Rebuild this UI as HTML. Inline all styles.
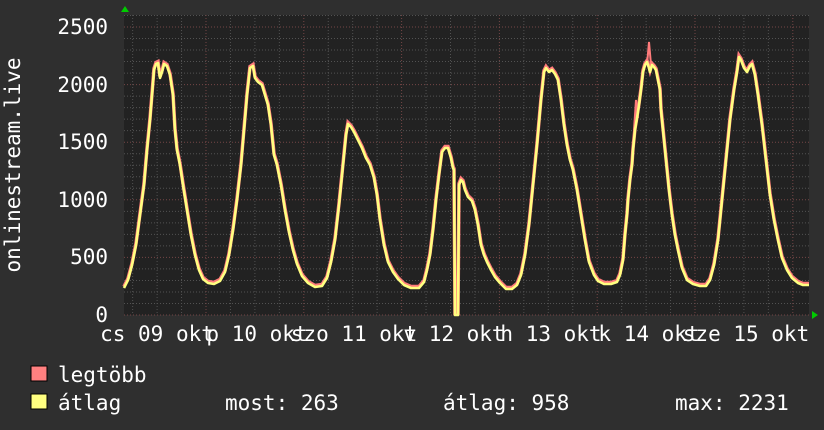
<!DOCTYPE html>
<html><head><meta charset="utf-8"><style>
html,body{margin:0;padding:0;background:#2f2f2f;}
svg{display:block;font-family:"DejaVu Sans Mono","Liberation Mono",monospace;}
</style></head><body>
<svg width="824" height="430" viewBox="0 0 824 430" xmlns="http://www.w3.org/2000/svg">
<rect width="824" height="430" fill="#2f2f2f"/>
<rect x="124" y="15" width="685" height="300" fill="#222"/>
<g id="grid"></g>
<g font-size="21" fill="#fff" text-anchor="end">
<text x="108" y="34">2500</text>
<text x="108" y="92">2000</text>
<text x="108" y="149">1500</text>
<text x="108" y="207">1000</text>
<text x="108" y="264">500</text>
<text x="108" y="322">0</text>
</g>
<text transform="translate(20,165) rotate(-90)" font-size="21" fill="#fff" text-anchor="middle">onlinestream.live</text>
<g font-size="21" fill="#fff" text-anchor="middle">
<text x="157" y="341">cs 09 okt</text>
<text x="257" y="341">p 10 okt</text>
<text x="354" y="341">szo 11 okt</text>
<text x="454" y="341">v 12 okt</text>
<text x="551" y="341">h 13 okt</text>
<text x="649" y="341">k 14 okt</text>
<text x="746" y="341">sze 15 okt</text>
</g>
<polyline id="pk" fill="none" stroke="#ff7b7b" stroke-width="3.5" transform="translate(0,-1.5)"/>
<polyline points="634,130 636,100 638,118" fill="none" stroke="#ff7b7b" stroke-width="2"/>
<polyline points="647,65 649,42 651,65" fill="none" stroke="#ff7b7b" stroke-width="2"/>
<polyline id="yl" fill="none" stroke="#ffff80" stroke-width="2.6" stroke-linejoin="round"/>
<polygon points="121,12 129,12 125,6" fill="#0c0"/>
<polygon points="812,311 812,319 818,315" fill="#0c0"/>
<rect x="31" y="366" width="16" height="15" fill="#ff8080" stroke="#000" stroke-width="1"/>
<rect x="31" y="394" width="16" height="15" fill="#ffff80" stroke="#000" stroke-width="1"/>
<g font-size="21" fill="#fff">
<text x="58" y="382">legtöbb</text>
<text x="58" y="410">átlag</text>
<text x="225" y="410">most: 263</text>
<text x="443" y="410">átlag: 958</text>
<text x="675" y="410">max: 2231</text>
</g>
</svg>
<script>
var ns="http://www.w3.org/2000/svg",g=document.getElementById("grid");
function ln(x1,y1,x2,y2,c){var l=document.createElementNS(ns,"line");l.setAttribute("x1",x1);l.setAttribute("y1",y1);l.setAttribute("x2",x2);l.setAttribute("y2",y2);l.setAttribute("stroke",c);l.setAttribute("stroke-dasharray","1,2");g.appendChild(l);}
for(var i=0;i<=26;i++){var y=315-i*11.52;if(y<15)break;ln(124,y,809,y,i%5==0?"#744646":"#525252");}
for(var k=-3;k<30;k++){var x=206+k*24.45;if(x<124||x>809)continue;ln(x,15,x,315,(k%4==0)?"#744646":"#525252");}
var p="124,288 128,280 132,265 136,245 140,215 144,185 147,150 150,120 152,95 154,70 156,64 158,63 160,78 162,72 164,64 167,66 170,75 173,95 175,130 177,150 180,165 183,185 187,210 191,235 195,255 199,270 203,279 208,283 214,284 220,281 225,272 229,255 233,230 237,200 241,165 244,130 247,95 250,68 253,66 255,78 258,82 262,85 265,95 268,105 271,125 274,155 277,165 281,185 285,210 289,232 293,250 297,264 302,276 308,283 315,287 322,286 327,278 331,262 335,240 339,205 343,165 346,135 348,124 351,127 354,132 358,140 362,148 366,158 370,165 374,178 377,195 380,220 384,245 388,262 393,272 398,279 404,285 411,288 419,288 424,282 427,270 430,255 433,230 436,200 439,175 442,152 445,148 448,148 451,158 453,168 454,170 455,315 458,315 459,185 461,180 463,182 465,190 468,197 472,201 475,210 478,225 481,245 484,255 487,262 491,270 495,277 500,283 506,289 512,289 517,285 521,275 525,255 529,225 533,185 537,145 541,100 544,72 546,68 549,72 552,70 555,74 558,80 561,100 564,125 567,145 570,160 573,170 577,190 581,215 585,240 589,262 594,275 598,281 604,284 611,284 617,282 620,275 623,260 625,235 627,215 628,200 630,180 632,165 633,150 635,130 637,118 639,105 641,90 643,72 645,65 647,62 649,68 650,72 652,65 654,67 656,70 658,80 660,90 661,110 663,130 665,150 667,170 669,190 672,215 675,235 678,250 682,268 687,280 693,284 700,286 706,286 710,280 714,265 718,240 722,200 726,160 730,120 734,90 737,72 739,57 741,60 744,68 747,72 750,66 752,64 755,75 758,95 762,125 766,160 770,195 774,220 778,240 782,258 787,270 792,278 798,283 803,285 809,285";
document.getElementById("yl").setAttribute("points",p);
document.getElementById("pk").setAttribute("points",p);
</script>
</body></html>
